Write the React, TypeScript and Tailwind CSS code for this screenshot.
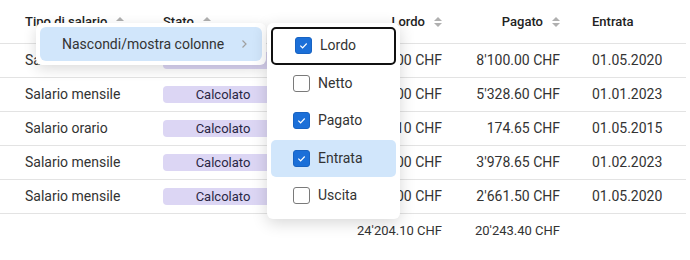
import { ReactNode } from 'react';

// Rows of the salary table
interface Row {
    tipo: string;
    lordo: string;
    pagato: string;
    entrata: string;
}

const rows: Row[] = [
    { tipo: 'Salario mensile', lordo: '9\'000.00 CHF', pagato: "8'100.00 CHF", entrata: '01.05.2020' },
    { tipo: 'Salario mensile', lordo: "6'000.00 CHF", pagato: "5'328.60 CHF", entrata: '01.01.2023' },
    { tipo: 'Salario orario', lordo: '204.10 CHF', pagato: '174.65 CHF', entrata: '01.05.2015' },
    { tipo: 'Salario mensile', lordo: "4'500.00 CHF", pagato: "3'978.65 CHF", entrata: '01.02.2023' },
    { tipo: 'Salario mensile', lordo: "3'000.00 CHF", pagato: "2'661.50 CHF", entrata: '01.05.2020' },
];

const columns = [
    { label: 'Lordo', checked: true, focused: true, hover: false },
    { label: 'Netto', checked: false, focused: false, hover: false },
    { label: 'Pagato', checked: true, focused: false, hover: false },
    { label: 'Entrata', checked: true, focused: false, hover: true },
    { label: 'Uscita', checked: false, focused: false, hover: false },
];

function SortIcon() {
    return (
        <svg width="8" height="10" viewBox="0 0 8 10" className="shrink-0">
            <path d="M4 0 L8 4 L0 4 Z" fill="#b0b0b0" />
            <path d="M0 6 L8 6 L4 10 Z" fill="#b0b0b0" />
        </svg>
    );
}

function Checkbox({ checked }: { checked: boolean }) {
    if (!checked) {
        return <span className="w-[17px] h-[17px] rounded-[3px] border border-[#7a7a7a] bg-white shrink-0" />;
    }
    return (
        <span className="w-[17px] h-[17px] rounded-[3px] bg-[#1b6fd8] border border-[#1863c2] flex items-center justify-center shrink-0">
            <svg width="11" height="11" viewBox="0 0 12 12">
                <path d="M2.5 6.2 L5 8.5 L9.5 3.8" fill="none" stroke="white" strokeWidth="1.3" />
            </svg>
        </span>
    );
}

function Cell({ className, children }: { className: string; children?: ReactNode }) {
    return <div className={`flex items-center ${className}`}>{children}</div>;
}

export default function App() {
    return (
        <div className="relative w-[690px] h-[260px] bg-white text-[14px] text-[#333] overflow-hidden" style={{ fontFamily: 'Roboto, "Liberation Sans", sans-serif' }}>
            <div className="w-[686px]">
                {/* header */}
                <div className="flex h-[44px] border-b border-[#e3e3e3] font-medium text-[13px] text-[#222]">
                    <Cell className="w-[147px] pl-[25px] gap-[9px]">Tipo di salario <SortIcon /></Cell>
                    <Cell className="w-[152px] pl-[16px] gap-[9px]">Stato <SortIcon /></Cell>
                    <Cell className="w-[159px] pr-[16px] justify-end gap-[9px]">Lordo <SortIcon /></Cell>
                    <Cell className="w-[118px] pr-[16px] justify-end gap-[9px]">Pagato <SortIcon /></Cell>
                    <Cell className="flex-1 pl-[16px]">Entrata</Cell>
                </div>
                {rows.map((row, i) => (
                    <div key={i} className="flex h-[34px] border-b border-[#e3e3e3]">
                        <Cell className="w-[147px] pl-[25px]">{row.tipo}</Cell>
                        <Cell className="w-[152px] pl-[16px]">
                            <span className="w-[120px] h-[17px] rounded-[4px] bg-[#dcd6f4] text-[13px] text-[#2a2744] flex items-center justify-center">Calcolato</span>
                        </Cell>
                        <Cell className="w-[159px] pr-[16px] justify-end">{row.lordo}</Cell>
                        <Cell className="w-[118px] pr-[16px] justify-end">{row.pagato}</Cell>
                        <Cell className="flex-1 pl-[16px]">{row.entrata}</Cell>
                    </div>
                ))}
                {/* totals */}
                <div className="flex h-[34px] text-[13px]">
                    <Cell className="w-[147px]" />
                    <Cell className="w-[152px]" />
                    <Cell className="w-[159px] pr-[16px] justify-end">24'204.10 CHF</Cell>
                    <Cell className="w-[118px] pr-[16px] justify-end">20'243.40 CHF</Cell>
                    <Cell className="flex-1" />
                </div>
            </div>

            {/* context menu */}
            <div className="absolute left-[36px] top-[23px] w-[230px] p-[4px] bg-white rounded-[6px] shadow-[0_4px_14px_rgba(0,0,0,0.14)]">
                <div className="h-[34px] rounded-[6px] bg-[#d1e6fb] flex items-center justify-between pl-[22px] pr-[14px] text-[#333]">
                    <span>Nascondi/mostra colonne</span>
                    <svg width="8" height="10" viewBox="0 0 8 10">
                        <path d="M2.5 1.5 L6 5 L2.5 8.5" fill="none" stroke="#a0a0a0" strokeWidth="1.2" />
                    </svg>
                </div>
            </div>

            {/* submenu */}
            <div className="absolute left-[267px] top-[23px] w-[133px] p-[4px] bg-white rounded-[6px] shadow-[0_4px_16px_rgba(0,0,0,0.16)]">
                {columns.map(col => (
                    <div
                        key={col.label}
                        className={`h-[37.5px] flex items-center gap-[8px] pl-[22px] rounded-[5px] text-[#333] ${col.focused ? 'border-2 border-[#111] pl-[20px]' : ''} ${col.hover ? 'bg-[#d1e6fb]' : ''}`}
                    >
                        <Checkbox checked={col.checked} />
                        <span>{col.label}</span>
                    </div>
                ))}
            </div>
        </div>
    );
}
